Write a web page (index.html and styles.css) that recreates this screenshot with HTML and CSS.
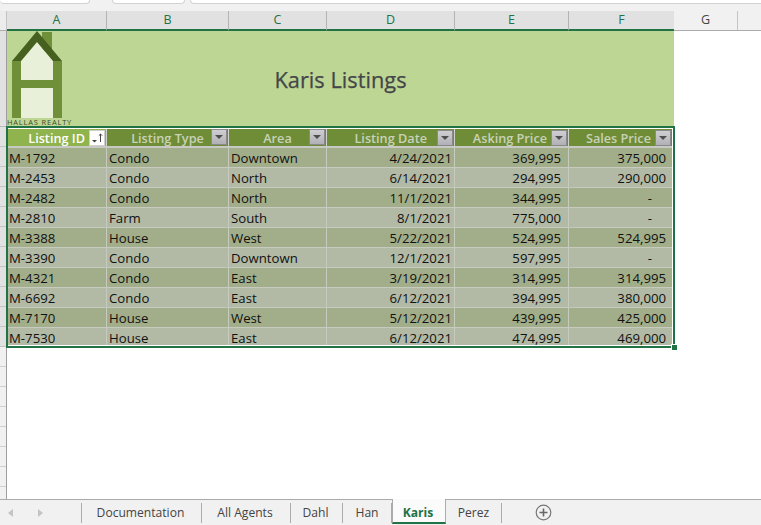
FILE: index.html
```html
<!DOCTYPE html>
<html lang="en">
<head>
<meta charset="utf-8">
<title>Karis Listings</title>
<link rel="stylesheet" href="styles.css">
</head>
<body>
<div class="app">
  <div class="ribbon-edge"><span class="rtab rtab-a"></span><span class="rtab rtab-b"></span><span class="rtab rtab-c"></span></div>
  <div class="col-heads">
    <div class="corner"></div>
    <div class="ch on w-a">A</div><div class="ch on w-b">B</div><div class="ch on w-c">C</div><div class="ch on w-d">D</div><div class="ch on w-e">E</div><div class="ch on w-f">F</div>
    <div class="ch w-g">G</div><div class="ch rest"></div>
  </div>
  <div class="grid-area">
    <div class="row-heads">
      <div class="rh r-banner"></div><div class="rh on"></div><div class="rh on"></div><div class="rh on"></div><div class="rh on"></div><div class="rh on"></div><div class="rh on"></div><div class="rh on"></div><div class="rh on"></div><div class="rh on"></div><div class="rh on"></div><div class="rh on"></div><div class="rh"></div><div class="rh"></div><div class="rh"></div><div class="rh"></div><div class="rh"></div><div class="rh"></div><div class="rh"></div>
    </div>
    <div class="sheet">
      <div class="banner">
        <svg class="logo" width="66" height="96" viewBox="0 0 66 96" aria-hidden="true">
          <rect x="35" y="1" width="10" height="20" fill="#6f8f38"/>
          <rect x="5" y="30" width="50" height="57" fill="#6f8f38"/>
          <polygon points="30,11 46,30 46,49 14,49 14,30" fill="#e9f0da"/>
          <rect x="14" y="57" width="32" height="30" fill="#e9f0da"/>
          <polygon points="30,0 55,30 46,30 30,11 14,30 5,30" fill="#46601f"/>
        </svg>
        <div class="logo-text">HALLAS REALTY</div>
        <h1 class="title">Karis Listings</h1>
      </div>
      <div class="selection">
        <table class="listings">
          <colgroup><col class="c-a"><col class="c-b"><col class="c-c"><col class="c-d"><col class="c-e"><col class="c-f"></colgroup>
          <thead>
            <tr>
              <th class="active"><div class="th-in"><span class="th-l">Listing ID</span><span class="fbtn sort"><svg width="14" height="14" viewBox="0 0 14 14" aria-hidden="true"><path d="M2 9h5l-2.500 2.500z" fill="#444"/><path d="M10.500 11V3M8.800 4.700l1.700-1.700 1.700 1.700" fill="none" stroke="#444"/></svg></span></div></th>
              <th><div class="th-in center"><span class="th-l">Listing Type</span><span class="fbtn"><i></i></span></div></th>
              <th><div class="th-in center"><span class="th-l">Area</span><span class="fbtn"><i></i></span></div></th>
              <th><div class="th-in wide"><span class="th-l">Listing Date</span><span class="fbtn"><i></i></span></div></th>
              <th><div class="th-in"><span class="th-l">Asking Price</span><span class="fbtn"><i></i></span></div></th>
              <th><div class="th-in"><span class="th-l">Sales Price</span><span class="fbtn"><i></i></span></div></th>
            </tr>
          </thead>
          <tbody>
            <tr><td>M-1792</td><td>Condo</td><td>Downtown</td><td class="num">4/24/2021</td><td class="num">369,995</td><td class="num">375,000</td></tr>
            <tr><td>M-2453</td><td>Condo</td><td>North</td><td class="num">6/14/2021</td><td class="num">294,995</td><td class="num">290,000</td></tr>
            <tr><td>M-2482</td><td>Condo</td><td>North</td><td class="num">11/1/2021</td><td class="num">344,995</td><td class="num dash">-</td></tr>
            <tr><td>M-2810</td><td>Farm</td><td>South</td><td class="num">8/1/2021</td><td class="num">775,000</td><td class="num dash">-</td></tr>
            <tr><td>M-3388</td><td>House</td><td>West</td><td class="num">5/22/2021</td><td class="num">524,995</td><td class="num">524,995</td></tr>
            <tr><td>M-3390</td><td>Condo</td><td>Downtown</td><td class="num">12/1/2021</td><td class="num">597,995</td><td class="num dash">-</td></tr>
            <tr><td>M-4321</td><td>Condo</td><td>East</td><td class="num">3/19/2021</td><td class="num">314,995</td><td class="num">314,995</td></tr>
            <tr><td>M-6692</td><td>Condo</td><td>East</td><td class="num">6/12/2021</td><td class="num">394,995</td><td class="num">380,000</td></tr>
            <tr><td>M-7170</td><td>House</td><td>West</td><td class="num">5/12/2021</td><td class="num">439,995</td><td class="num">425,000</td></tr>
            <tr class="last"><td>M-7530</td><td>House</td><td>East</td><td class="num">6/12/2021</td><td class="num">474,995</td><td class="num">469,000</td></tr>
          </tbody>
        </table>
        <span class="handle"></span>
      </div>
    </div>
  </div>
  <div class="tabbar">
    <div class="nav"><span class="arrow left"></span><span class="arrow right"></span></div>
    <div class="tab t-doc">Documentation</div>
    <div class="tab t-all">All Agents</div>
    <div class="tab t-dahl">Dahl</div>
    <div class="tab t-han">Han</div>
    <div class="tab current">Karis</div>
    <div class="tab t-perez">Perez</div>
    <svg class="add" width="17" height="17" viewBox="0 0 17 17" aria-hidden="true"><circle cx="8.500" cy="8.500" r="7.300" fill="none" stroke="#777" stroke-width="1.200"/><path d="M8.500 4.500v8M4.500 8.500h8" stroke="#666" stroke-width="1.600"/></svg>
  </div>
</div>
</body>
</html>
```
FILE: styles.css
```css
* { box-sizing: border-box; }
html, body { margin: 0; padding: 0; background: #fff; }
body { font-family: "Open Sans", "Noto Sans", sans-serif; font-size: 13px; color: #111; }
.app { width: 761px; height: 525px; display: flex; flex-direction: column; overflow: hidden; }

.ribbon-edge { height: 11px; flex: none; background: #f1f1f1; display: flex; }
.rtab { height: 4px; background: #fff; border: 1px solid #d2d2d2; border-top: 0; border-radius: 0 0 4px 4px; }
.rtab-a { width: 90px; border-left: 0; }
.rtab-b { width: 73px; margin-left: 22px; }
.rtab-c { flex: 1; margin-left: 5px; border-right: 0; border-radius: 0 0 0 4px; }

.col-heads { height: 20px; flex: none; display: flex; background: #f1f1f1; border-bottom: 1px solid #ababab; }
.corner { width: 7px; flex: none; border-right: 1px solid #c4c4c4; background: #ececec; }
.ch { flex: none; height: 19px; line-height: 18px; text-align: center; font-size: 12.500px; color: #444; border-right: 1px solid #c4c4c4; }
.ch.on { background: #e1e1e1; color: #217346; height: 20px; border-bottom: 2px solid #217346; border-right-color: #b4b4b4; }
.ch.rest { flex: 1; border-right: 0; }
.w-a { width: 100px; }
.w-b { width: 122px; }
.w-c { width: 98px; }
.w-d { width: 128px; }
.w-e { width: 114px; }
.w-f { width: 105px; }
.ch.w-f { border-right: 0; }
.w-g { width: 64px; }

.grid-area { flex: 1; display: flex; min-height: 0; overflow: hidden; }
.row-heads { width: 7px; flex: none; background: #f1f1f1; border-right: 1px solid #9e9e9e; }
.rh { height: 20px; border-bottom: 1px solid #d0d0d0; }
.rh.on { background: #e1e1e1; border-bottom-color: #c4c4c4; }
.rh.r-banner { height: 96px; background: #e1e1e1; border-bottom-color: #b8b8b8; }

.sheet { flex: 1; min-width: 0; }
.banner { width: 667px; height: 95px; background: #bdd693; position: relative; display: flex; align-items: center; justify-content: center; }
.logo { position: absolute; left: 0; top: 0; }
.logo-text { position: absolute; left: 0; bottom: -1px; font-size: 7.500px; line-height: 10px; letter-spacing: .8px; color: #3d4a2a; white-space: nowrap; }
.title { margin: 0; font-size: 21.800px; font-weight: 400; color: #44464a; line-height: 28px; -webkit-text-stroke: .25px #44464a; position: relative; top: 1px; }

.selection { position: relative; width: 669px; height: 222px; margin-left: -1px; border: 2px solid #217346; background: #fff; padding: 1px 1px 1px 0; }
.listings { border-collapse: separate; border-spacing: 0; table-layout: fixed; width: 664px; }
.c-a { width: 99px; }
.c-b { width: 122px; }
.c-c { width: 98px; }
.c-d { width: 128px; }
.c-e { width: 114px; }
.c-f { width: 103px; }
.listings th { height: 18px; padding: 0; background: #6f8d37; color: #c9d2b8; font-size: 12.700px; font-weight: 600; border-right: 1px solid #d0d4c8; border-bottom: 1px solid #c8c8c8; }
.listings th.active { background: #8fb34d; color: #fff; }
.listings th:last-child, .listings td:last-child { border-right: 0; }
.th-in { display: flex; align-items: center; justify-content: flex-end; height: 17px; padding-right: 1px; gap: 4px; position: relative; }
.th-in.wide { gap: 10px; }
.th-in.center { justify-content: center; padding-right: 0; }
.th-l { white-space: nowrap; line-height: 17px; margin-top: 2px; }
.fbtn { width: 16px; height: 16px; flex: none; background: linear-gradient(#cfcfd3, #b0b0b6); border: 1px solid #8a8a8a; display: flex; align-items: center; justify-content: center; }
.th-in.center .fbtn { position: absolute; right: 1px; top: 0; }
.fbtn i { width: 0; height: 0; border-left: 4px solid transparent; border-right: 4px solid transparent; border-top: 4px solid #4e4e4e; }
.fbtn.sort { background: #fff; border: 1px solid #cfcfcf; }
.listings td { height: 20px; padding: 1px 2px 0; font-size: 13.200px; line-height: 18px; color: #111; background: #a2ae8a; border-right: 1px solid #c7cbbf; border-top: 1px solid #c7cbbf; white-space: nowrap; }
.listings tbody tr:nth-child(even) td { background: #b2baa6; }
.listings tbody tr.last td { height: 18px; padding-top: 3px; line-height: 14px; }
.listings td:first-child { padding-left: 1px; }
.listings td.num { text-align: right; }
.listings td.num:nth-child(5) { padding-right: 7px; }
.listings td.num:nth-child(6) { padding-right: 6px; }
.listings td.num.dash { padding-right: 20px; }
.handle { position: absolute; right: -4px; bottom: -4px; width: 5px; height: 5px; background: #217346; outline: 1px solid #fff; }

.tabbar { height: 26px; flex: none; background: #f1f1f1; border-top: 1px solid #ababab; display: flex; align-items: stretch; }
.nav { width: 82px; flex: none; display: flex; align-items: center; gap: 25px; padding-left: 8px; border-right: 1px solid #ababab; margin: 3px 0 2px; }
.arrow { width: 0; height: 0; border-top: 4px solid transparent; border-bottom: 4px solid transparent; }
.arrow.left { border-right: 5px solid #c4c4c4; }
.arrow.right { border-left: 5px solid #c4c4c4; }
.tab { font-size: 12.100px; line-height: 20px; text-align: center; color: #444; border-right: 1px solid #ababab; margin: 3px 0 2px; white-space: nowrap; }
.t-doc { width: 120px; padding-right: 2px; }
.t-all { width: 89px; padding-right: 2px; }
.t-dahl { width: 52px; padding-right: 2px; }
.t-han { width: 49px; }
.t-perez { width: 56px; }
.tab.current { width: 54px; margin: -1px 0 1px; padding: 5px 2px 0 0; background: #fbfbfb; font-weight: 700; color: #217346; border-left: 1px solid #ababab; border-bottom: 2px solid #217346; line-height: 18px; }
.add { align-self: center; margin-left: 33px; margin-top: -1px; }
```
